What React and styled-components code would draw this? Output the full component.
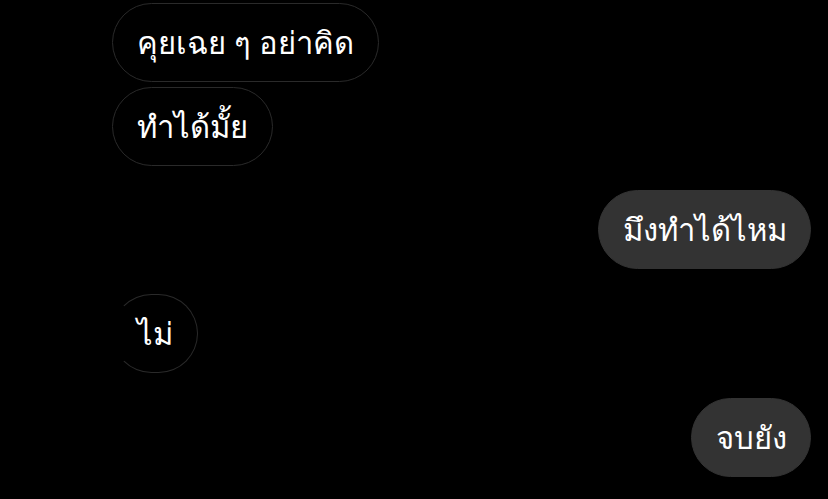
import React from 'react';
import styled, {createGlobalStyle} from 'styled-components';

const GlobalStyle = createGlobalStyle`
	html, body {
		margin: 0;
		padding: 0;
		background: #000;
	}
	body {
		width: 828px;
		height: 499px;
		overflow: hidden;
		font-family: 'Noto Sans', 'DejaVu Sans', 'Liberation Sans', sans-serif;
	}
`;

const Thread = styled.div`
	display: flex;
	flex-direction: column;
	padding: 3px 17px 0 112px;
	box-sizing: border-box;
	width: 828px;
	height: 499px;
	background: #000;
`;

const Row = styled.div`
	display: flex;
	justify-content: ${({$mine}) => ($mine ? 'flex-end' : 'flex-start')};
	margin-top: ${({$gap}) => $gap}px;
`;

const Bubble = styled.div`
	display: flex;
	align-items: center;
	box-sizing: border-box;
	height: 79px;
	padding: 0 ${({$mine}) => ($mine ? 23 : 24)}px 0 24px;
	border-radius: 40px;
	font-size: 31px;
	color: #fff;
	white-space: nowrap;
	background: ${({$mine}) => ($mine ? '#333' : '#000')};
	border: 1.5px solid ${({$mine}) => ($mine ? '#333' : '#2a2a2a')};
	border-left-color: ${({$mine, $faded}) =>
		$faded ? 'transparent' : $mine ? '#333' : '#2a2a2a'};
`;

const messages = [
	{text: 'คุยเฉย ๆ อย่าคิด', mine: false, gap: 0},
	{text: 'ทำได้มั้ย', mine: false, gap: 5},
	{text: 'มึงทำได้ไหม', mine: true, gap: 24},
	{text: 'ไม่', mine: false, gap: 25, faded: true},
	{text: 'จบยัง', mine: true, gap: 25},
];

const App = () => (
	<>
		<GlobalStyle />
		<Thread>
			{messages.map((m, i) => (
				<Row key={i} $mine={m.mine} $gap={m.gap}>
					<Bubble $mine={m.mine} $faded={m.faded}>
						{m.text}
					</Bubble>
				</Row>
			))}
		</Thread>
	</>
);

export default App;
